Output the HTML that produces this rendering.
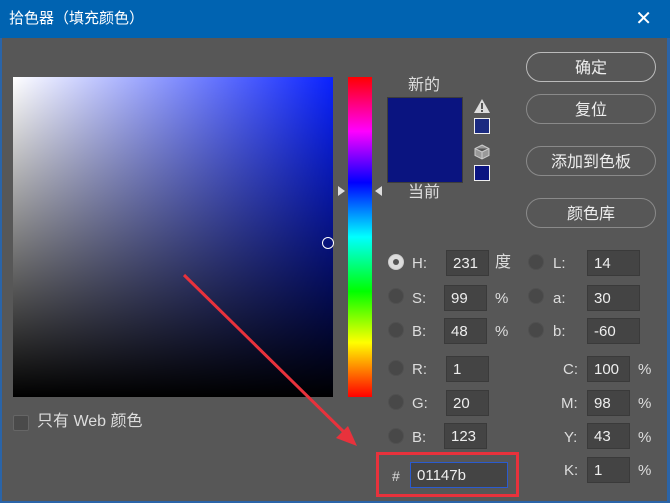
<!DOCTYPE html>
<html><head><meta charset="utf-8"><style>
*{margin:0;padding:0;box-sizing:border-box}
body{width:670px;height:503px;background:#575757;position:relative;overflow:hidden;font-family:"Liberation Sans","Noto Sans CJK SC",sans-serif;color:#e6e6e6}
.a{position:absolute}
.title{left:0;top:0;width:670px;height:38px;background:#0063b1;color:#fff;font-size:15px;line-height:38px;padding-left:9px}
.btn{position:absolute;left:526px;width:130px;height:30px;border:1px solid #8a8a8a;border-radius:15px;text-align:center;line-height:31px;font-size:16px;color:#eee}
.inp{position:absolute;width:43px;height:26px;background:#444;border:1px solid #3a3a3a;font-size:15px;line-height:26px;padding-left:6px;color:#eee}
.rad{position:absolute;width:16px;height:16px;border-radius:50%;background:#484848;border:1px solid #505050}
.lb{position:absolute;font-size:15px;line-height:18px;color:#ddd}
</style></head><body>
<div class="a title">拾色器（填充颜色）<span style="position:absolute;right:18px;top:0;font-size:20px">✕</span></div>
<div class="a" style="right:0;top:38px;width:3px;height:465px;background:#2a64a8"></div>
<div class="a" style="left:0;top:38px;width:2px;height:465px;background:#2a64a8"></div>
<div class="a" style="left:0;bottom:0;width:670px;height:2px;background:#2a64a8"></div>
<div class="a" style="left:13px;top:77px;width:320px;height:320px;background:linear-gradient(to bottom,rgba(0,0,0,0),#000),linear-gradient(to right,#fff,#0a22ff)"></div>
<div class="a" style="left:322px;top:237px;width:12px;height:12px;border-radius:50%;border:1px solid #fff"></div>
<div class="a" style="left:348px;top:77px;width:24px;height:320px;background:linear-gradient(to bottom,#f00,#f0f 17%,#00f 33%,#0ff 50%,#0f0 67%,#ff0 83%,#f00)"></div>
<div class="a" style="left:338px;top:186px;width:0;height:0;border-left:7px solid #ddd;border-top:5px solid transparent;border-bottom:5px solid transparent"></div>
<div class="a" style="left:375px;top:186px;width:0;height:0;border-right:7px solid #ddd;border-top:5px solid transparent;border-bottom:5px solid transparent"></div>
<div class="lb" style="left:408px;top:77px;font-size:16px">新的</div>
<div class="a" style="left:387px;top:97px;width:76px;height:86px;background:#0a1480;border:1px solid #3c3c3c"></div>
<div class="lb" style="left:408px;top:184px;font-size:16px">当前</div>
<svg class="a" style="left:473px;top:98px" width="18" height="16"><path d="M9 1L17 15H1Z" fill="#ddd"/><rect x="8" y="5" width="2" height="6" fill="#555"/><rect x="8" y="12" width="2" height="2" fill="#555"/></svg>
<div class="a" style="left:474px;top:118px;width:16px;height:16px;border:1px solid #eee;background:#1a2a80"></div>
<svg class="a" style="left:474px;top:144px" width="16" height="16"><path d="M8 1L15 4.5V11.5L8 15L1 11.5V4.5Z M1 4.5L8 8L15 4.5 M8 8V15" fill="#999" stroke="#ccc" stroke-width="1"/></svg>
<div class="a" style="left:474px;top:165px;width:16px;height:16px;border:1px solid #eee;background:#0a1480"></div>
<div class="btn" style="top:52px;border-color:#bbb">确定</div>
<div class="btn" style="top:94px">复位</div>
<div class="btn" style="top:146px">添加到色板</div>
<div class="btn" style="top:198px">颜色库</div>
<div class="rad" style="left:388px;top:254px;background:#ddd;border-color:#ccc"></div><div class="a" style="left:393px;top:259px;width:6px;height:6px;border-radius:50%;background:#555"></div>
<div class="lb" style="left:412px;top:255px">H:</div><div class="inp" style="left:446px;top:250px">231</div><div class="lb" style="left:495px;top:254px;font-size:16px">度</div>
<div class="rad" style="left:388px;top:288px"></div><div class="lb" style="left:412px;top:290px">S:</div><div class="inp" style="left:444px;top:285px">99</div><div class="lb" style="left:495px;top:290px">%</div>
<div class="rad" style="left:388px;top:322px"></div><div class="lb" style="left:412px;top:323px">B:</div><div class="inp" style="left:444px;top:318px">48</div><div class="lb" style="left:495px;top:323px">%</div>
<div class="rad" style="left:528px;top:254px"></div><div class="lb" style="left:553px;top:255px">L:</div><div class="inp" style="left:587px;top:250px;width:53px">14</div>
<div class="rad" style="left:528px;top:288px"></div><div class="lb" style="left:553px;top:290px">a:</div><div class="inp" style="left:587px;top:285px;width:53px">30</div>
<div class="rad" style="left:528px;top:322px"></div><div class="lb" style="left:553px;top:323px">b:</div><div class="inp" style="left:587px;top:318px;width:53px">-60</div>
<div class="rad" style="left:388px;top:360px"></div><div class="lb" style="left:412px;top:361px">R:</div><div class="inp" style="left:446px;top:356px">1</div>
<div class="rad" style="left:388px;top:394px"></div><div class="lb" style="left:412px;top:395px">G:</div><div class="inp" style="left:446px;top:390px">20</div>
<div class="rad" style="left:388px;top:428px"></div><div class="lb" style="left:412px;top:429px">B:</div><div class="inp" style="left:444px;top:423px">123</div>
<div class="lb" style="left:563px;top:361px">C:</div><div class="inp" style="left:587px;top:356px">100</div><div class="lb" style="left:638px;top:361px">%</div>
<div class="lb" style="left:561px;top:395px">M:</div><div class="inp" style="left:587px;top:390px">98</div><div class="lb" style="left:638px;top:395px">%</div>
<div class="lb" style="left:564px;top:429px">Y:</div><div class="inp" style="left:587px;top:423px">43</div><div class="lb" style="left:638px;top:429px">%</div>
<div class="lb" style="left:564px;top:462px">K:</div><div class="inp" style="left:587px;top:457px">1</div><div class="lb" style="left:638px;top:462px">%</div>
<div class="a" style="left:376px;top:452px;width:143px;height:45px;border:3px solid #e8323c"></div>
<div class="lb" style="left:392px;top:467px;font-size:14px">#</div>
<div class="inp" style="left:410px;top:462px;width:98px;border-color:#2a5bd0">01147b</div>
<div class="a" style="left:13px;top:415px;width:16px;height:16px;border:1px solid #666;border-radius:2px;background:#4a4a4a"></div>
<div class="lb" style="left:37px;top:413px;font-size:16px;line-height:18px">只有 Web 颜色</div>
<svg class="a" style="left:0;top:0" width="670" height="503"><line x1="184" y1="275" x2="348" y2="436" stroke="#e8323c" stroke-width="3"/><path d="M357 446L336 438L348 426Z" fill="#e8323c"/></svg>
</body></html>
